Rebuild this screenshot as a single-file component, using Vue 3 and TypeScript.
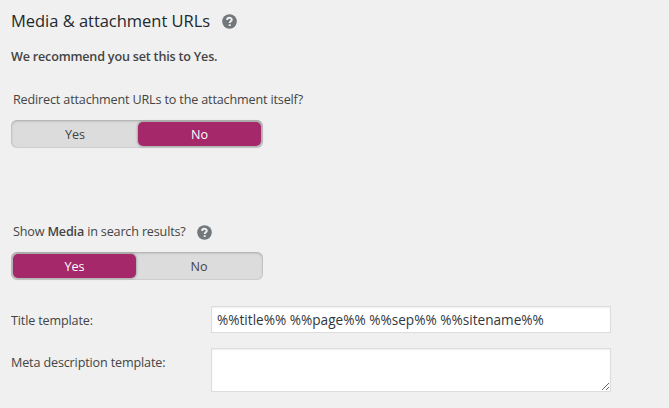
<script setup lang="ts">
import { ref } from 'vue'

type Choice = 'Yes' | 'No'
const choices: Choice[] = ['Yes', 'No']
const redirect = ref<Choice>('No')
const showMedia = ref<Choice>('Yes')
const titleTemplate = ref('%%title%% %%page%% %%sep%% %%sitename%%')
const metaTemplate = ref('')
</script>

<template>
  <main class="settings">
    <header class="heading">
      <h2>Media &amp; attachment URLs</h2>
      <button class="help" type="button" aria-label="Help">
        <svg viewBox="0 0 16 16"><circle cx="8" cy="8" r="7.8" /><path d="M5.5 6.3C5.5 3.4 10.4 3.4 10.4 6.1C10.4 7.8 8.2 7.7 8.2 9.6M8.2 10.8V12.9" /></svg>
      </button>
    </header>
    <p class="advice">We recommend you set this to Yes.</p>

    <section class="question">
      <div class="legend"><span class="redirect-label">Redirect attachment URLs to the attachment itself?</span></div>
      <div class="switch">
        <button v-for="c in choices" :key="c" type="button" :class="{ on: redirect === c }" @click="redirect = c">{{ c }}</button>
      </div>
    </section>

    <section class="question second">
      <div class="legend">
        <span class="show-label">Show <strong>Media</strong> in search results?</span>
        <button class="help" type="button" aria-label="Help">
          <svg viewBox="0 0 16 16"><circle cx="8" cy="8" r="7.8" /><path d="M5.5 6.3C5.5 3.4 10.4 3.4 10.4 6.1C10.4 7.8 8.2 7.7 8.2 9.6M8.2 10.8V12.9" /></svg>
        </button>
      </div>
      <div class="switch">
        <button v-for="c in choices" :key="c" type="button" :class="{ on: showMedia === c }" @click="showMedia = c">{{ c }}</button>
      </div>
    </section>

    <div class="field">
      <label class="title-label" for="title">Title template:</label>
      <input id="title" v-model="titleTemplate" type="text" />
    </div>
    <div class="field meta">
      <label class="meta-label" for="meta">Meta description template:</label>
      <textarea id="meta" v-model="metaTemplate"></textarea>
    </div>
  </main>
</template>

<style>
body { background: #f0f0f0; overflow: hidden; }
</style>

<style scoped>
.settings { box-sizing: border-box; height: 408px; padding: 9px 0 0 11px; background: #f0f0f0; color: #444; font: 12.6px/20px "Open Sans", "Noto Sans", sans-serif; letter-spacing: -.15px; }
button, input, textarea { font-family: inherit; margin: 0; box-sizing: border-box; }
.heading { display: flex; align-items: center; height: 24px; }
h2 { margin: 0; width: 211px; white-space: nowrap; color: #23282d; font-size: 16.5px; line-height: 24px; font-weight: 500; letter-spacing: -.03px; }
.help { display: block; width: 15px; height: 15px; padding: 0; border: 0; background: none; }
.help svg { display: block; width: 15px; height: 15px; }
.help circle { fill: #72777c; }
.help path { fill: none; stroke: #f0f0f0; stroke-width: 2.1; }
.advice { margin: 14px 0 0; font-weight: 600; white-space: nowrap; letter-spacing: -.2px; }
.question { margin-top: 23px; }
.legend { display: flex; align-items: center; height: 20px; padding-left: 2px; white-space: nowrap; }
.redirect-label { letter-spacing: -.16px; }
.show-label { width: 184px; letter-spacing: -.17px; }
strong { font-weight: 600; }
.switch { box-sizing: border-box; display: flex; justify-content: space-between; width: 252px; height: 28px; margin-top: 10px; padding: 2px; border-radius: 6px; background: #dcdcdc; box-shadow: inset 0 1px 3px rgba(0,0,0,.2), inset 0 0 0 1px rgba(0,0,0,.04); }
.switch button { width: 124px; height: 24px; padding: 2px 0 0; border: 0; border-radius: 5px; background: none; color: #444; font-size: 12.6px; line-height: 22px; letter-spacing: -.1px; }
.switch .on { width: 123px; background: #a4286a; color: #fff; box-shadow: 0 0 2px 1px rgba(0,0,0,.22); }
.second { margin-top: 74px; }
.field { display: flex; align-items: flex-start; margin-top: 26px; }
.field label { width: 200px; padding-top: 5px; white-space: nowrap; }
.field input, .field textarea { width: 400px; border: 1px solid #ddd; border-radius: 0; outline: 0; background: #fff; color: #32373c; box-shadow: inset 0 1px 2px rgba(0,0,0,.07); }
.field input { height: 27px; padding: 0 5px; font-size: 13.6px; letter-spacing: .01px; }
.field textarea { height: 44px; padding: 2px 6px; resize: vertical; }
.field.meta { margin-top: 15px; }
</style>
